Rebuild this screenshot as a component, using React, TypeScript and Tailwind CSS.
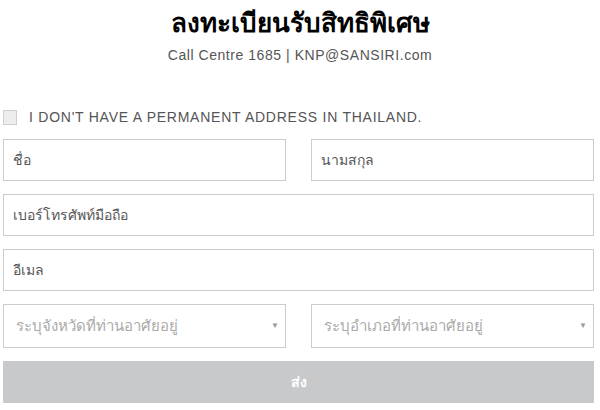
export default function App() {
  const field =
    "h-[42px] w-full border border-[#cccccc] bg-white px-[9px] text-[14px] text-[#555] placeholder:text-[#555] outline-none"
  return (
    <div className="w-[600px] h-[410px] bg-white overflow-hidden font-['Liberation_Sans',sans-serif]">
      <div className="flex flex-col items-center pt-[6px]">
        <h1 className="text-[26px] leading-[34px] font-bold text-black">ลงทะเบียนรับสิทธิพิเศษ</h1>
        <p className="mt-[7px] text-[14px] leading-[16px] tracking-[0.55px] text-[#555]">
          Call Centre 1685 | KNP@SANSIRI.com
        </p>
      </div>

      <div className="px-[3px] pr-[6px]">
        <label className="mt-[46px] flex items-center gap-[12px]">
          <span className="h-[15px] w-[14px] border border-[#cfcfcf] bg-[#ededed]" />
          <span className="text-[14px] leading-[16px] tracking-[0.75px] text-[#555]">
            I DON'T HAVE A PERMANENT ADDRESS IN THAILAND.
          </span>
        </label>

        <div className="mt-[14px] flex flex-col gap-[13px]">
          <div className="grid grid-cols-2 gap-[25px]">
            <input className={field} placeholder="ชื่อ" />
            <input className={field} placeholder="นามสกุล" />
          </div>
          <input className={field} placeholder="เบอร์โทรศัพท์มือถือ" />
          <input className={field} placeholder="อีเมล" />
          <div className="grid grid-cols-2 gap-[25px]">
            {["ระบุจังหวัดที่ท่านอาศัยอยู่", "ระบุอำเภอที่ท่านอาศัยอยู่"].map((t) => (
              <div
                key={t}
                className="flex h-[44px] items-center justify-between border border-[#cccccc] bg-white pl-[12px] pr-[6px]"
              >
                <span className="text-[15px] text-[#aaa]">{t}</span>
                <span className="text-[8px] text-[#999]">▼</span>
              </div>
            ))}
          </div>
          <button className="h-[42px] w-full bg-[#c8c9cb] text-[14px] font-bold text-white">ส่ง</button>
        </div>
      </div>
    </div>
  )
}
